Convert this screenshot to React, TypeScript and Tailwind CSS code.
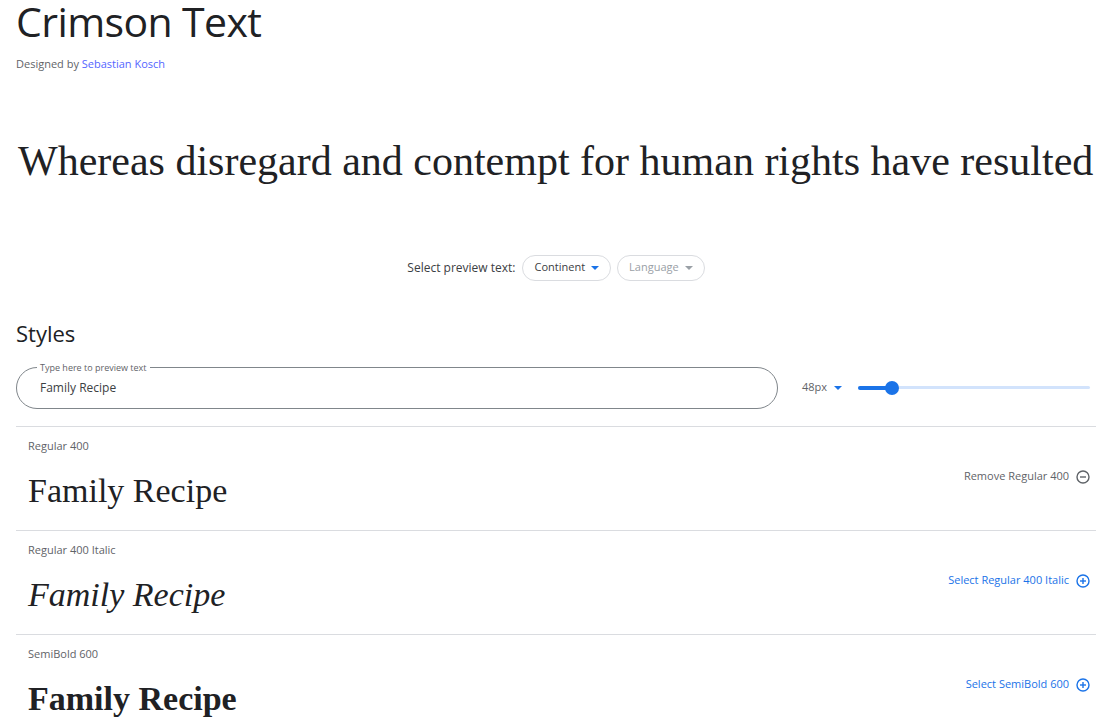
import { useState } from "react";

const styles = [
  { label: "Regular 400", cls: "font-normal", selected: true },
  { label: "Regular 400 Italic", cls: "font-normal italic", selected: false },
  { label: "SemiBold 600", cls: "font-semibold", selected: false },
];

function Caret({ className }: { className: string }) {
  return (
    <svg className={className} width="8" height="4" viewBox="0 0 8 4">
      <path d="M0 0h8L4 4z" fill="currentColor" />
    </svg>
  );
}

function CircleIcon({ plus }: { plus: boolean }) {
  return (
    <svg width="14" height="14" viewBox="0 0 14 14" fill="none">
      <circle cx="7" cy="7" r="6" stroke="currentColor" strokeWidth="1.4" />
      <path d="M4 7h6" stroke="currentColor" strokeWidth="1.4" />
      {plus && <path d="M7 4v6" stroke="currentColor" strokeWidth="1.4" />}
    </svg>
  );
}

export default function App() {
  const [preview, setPreview] = useState("Family Recipe");

  return (
    <div className="min-h-screen bg-white text-[#202124] overflow-hidden" style={{ fontFamily: '"Open Sans", "Liberation Sans", sans-serif' }}>
      <div className="px-4">
        {/* Titre */}
        <h1 className="text-[41px] leading-[43px] font-normal tracking-[-0.6px]">Crimson Text</h1>
        <p className="text-[11px] text-[#5f6368] mt-[13px]">
          Designed by <span className="text-[#5465ff]">Sebastian Kosch</span>
        </p>

        {/* Phrase de démonstration */}
        <div className="mt-[62px] whitespace-nowrap overflow-hidden">
          <p className="text-[42px] leading-[52px] pl-[2px] text-[#202124]" style={{ fontFamily: '"Liberation Serif", serif' }}>
            Whereas disregard and contempt for human rights have resulted
          </p>
        </div>

        {/* Sélection du texte */}
        <div className="mt-[68px] flex items-center justify-center gap-[6px] text-[12px]">
          <span className="text-[#3c4043] mr-[1px]">Select preview text:</span>
          <button className="flex items-center gap-[6px] h-[26px] px-[11px] rounded-full border border-[#dadce0] text-[#3c4043] text-[11px]">
            Continent
            <Caret className="text-[#1a73e8]" />
          </button>
          <button className="flex items-center gap-[6px] h-[26px] px-[11px] rounded-full border border-[#dadce0] text-[#9aa0a6] text-[11px]">
            Language
            <Caret className="text-[#9aa0a6]" />
          </button>
        </div>

        {/* Styles */}
        <h2 className="mt-[38px] text-[22px] leading-[28px] font-normal">Styles</h2>

        <div className="mt-[20px] flex items-center">
          <div className="relative w-[762px] h-[42px] rounded-full border border-[#80868b] flex items-center px-[23px]">
            <span className="absolute -top-[6px] left-[20px] bg-white px-[3px] text-[9px] leading-[11px] text-[#5f6368]">
              Type here to preview text
            </span>
            <input
              value={preview}
              onChange={(e) => setPreview(e.target.value)}
              className="w-full outline-none text-[12px] text-[#3c4043] bg-transparent"
            />
          </div>
          <div className="ml-[24px] flex items-center gap-[7px] text-[11px] text-[#5f6368]">
            48px
            <Caret className="text-[#1a73e8]" />
          </div>
          <div className="ml-[16px] relative flex-1 h-[14px] flex items-center mr-[6px]">
            <div className="w-full h-[3px] rounded-full bg-[#d2e3fc]" />
            <div className="absolute left-0 w-[34px] h-[4px] rounded-full bg-[#1a73e8]" />
            <div className="absolute left-[27px] w-[14px] h-[14px] rounded-full bg-[#1a73e8]" />
          </div>
        </div>

        {/* Liste des styles */}
        <div className="mt-[17px]">
          {styles.map((s) => (
            <div key={s.label} className="border-t border-[#dadce0] h-[104px] pl-[12px] pr-[6px] pt-[12px] flex">
              <div className="flex-1 min-w-0">
                <div className="text-[11px] leading-[14px] text-[#5f6368]">{s.label}</div>
                <div
                  className={`mt-[18px] text-[34px] leading-[40px] text-[#202124] whitespace-nowrap ${s.cls}`}
                  style={{ fontFamily: '"Liberation Serif", serif' }}
                >
                  {preview}
                </div>
              </div>
              <div
                className={`mt-[30px] h-[16px] flex items-center gap-[7px] text-[11px] ${
                  s.selected ? "text-[#5f6368]" : "text-[#1a73e8]"
                }`}
              >
                {s.selected ? "Remove" : "Select"} {s.label}
                <CircleIcon plus={!s.selected} />
              </div>
            </div>
          ))}
        </div>
      </div>
    </div>
  );
}
